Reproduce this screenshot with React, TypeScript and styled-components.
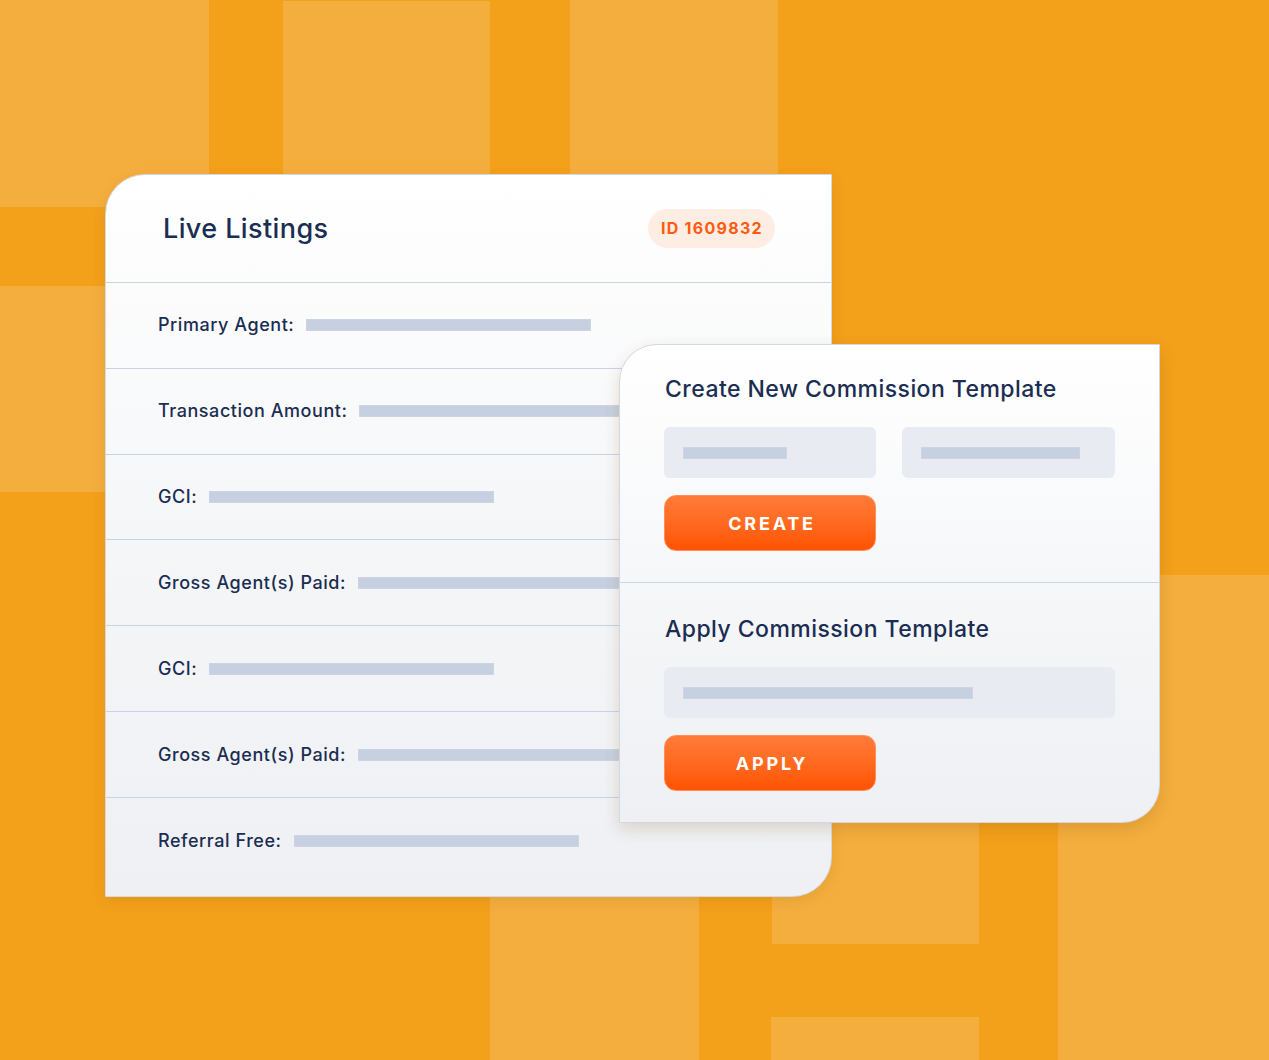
import styled, { createGlobalStyle } from "styled-components";

const GlobalStyle = createGlobalStyle`
  html, body {
    margin: 0;
    padding: 0;
    background: #f3a01b;
  }
  * {
    box-sizing: border-box;
  }
`;

const Stage = styled.div`
  position: relative;
  width: 1269px;
  height: 1060px;
  overflow: hidden;
  background: #f3a01b;
  padding: 174px 0 0 105px;
  font-family: Inter, "Open Sans", sans-serif;
  color: #1b2d52;
`;

const Tile = styled.div`
  position: absolute;
  background: #f4ae3e;
  z-index: 0;
`;

const ListingCard = styled.div`
  position: relative;
  z-index: 1;
  width: 727px;
  height: 723px;
  display: flex;
  flex-direction: column;
  background: linear-gradient(180deg, #ffffff 0%, #f6f7f9 45%, #eef0f3 100%);
  border: 1px solid #d3d9e5;
  border-radius: 40px 0 40px 0;
  box-shadow: 0 4px 14px rgba(120, 70, 0, 0.12);
`;

const CardHeader = styled.div`
  height: 108px;
  display: flex;
  align-items: center;
  justify-content: space-between;
  padding: 0 56px 0 57px;
  border-bottom: 1px solid #c9d3e6;

  h2 {
    margin: 0;
    font-size: 27px;
    font-weight: 500;
    letter-spacing: 0.4px;
    color: #1b2d52;
  }
`;

const Badge = styled.span`
  height: 39px;
  padding: 0 12px 0 13px;
  display: flex;
  align-items: center;
  border-radius: 20px;
  background: #feede3;
  color: #ff5a0f;
  font-size: 16px;
  font-weight: 700;
  letter-spacing: 1.3px;
`;

const Row = styled.div<{ $last?: boolean }>`
  height: ${({ $last }) => ($last ? "98px" : "86px")};
  display: flex;
  align-items: center;
  padding: ${({ $last }) => ($last ? "0 0 12px 52px" : "0 0 0 52px")};
  gap: 12px;
  border-bottom: ${({ $last }) => ($last ? "none" : "1px solid #c9d3e6")};
`;

const Label = styled.span`
  font-size: 18px;
  line-height: 22px;
  font-weight: 500;
  letter-spacing: 0.55px;
  color: #1b2d52;
  white-space: nowrap;
`;

const Bar = styled.div<{ $w: number }>`
  width: ${({ $w }) => $w}px;
  height: 12px;
  background: #c7d0e0;
  border: 1px solid #cdd5e4;
`;

const CommissionCard = styled.div`
  position: absolute;
  z-index: 2;
  left: 619px;
  top: 344px;
  width: 541px;
  height: 479px;
  display: flex;
  flex-direction: column;
  background: linear-gradient(180deg, #ffffff 0%, #f6f7f9 50%, #eef0f3 100%);
  border: 1px solid #d0d7e5;
  border-radius: 38px 0 38px 0;
  box-shadow: 0 6px 16px rgba(120, 70, 0, 0.18);
`;

const Section = styled.div<{ $top: number; $bordered?: boolean }>`
  display: flex;
  flex-direction: column;
  padding: ${({ $top }) => $top}px 44px 0 44px;
  height: ${({ $bordered }) => ($bordered ? "238px" : "auto")};
  border-bottom: ${({ $bordered }) => ($bordered ? "1px solid #cdd5e6" : "none")};

  h3 {
    margin: 0 0 24px 1px;
    font-size: 23px;
    line-height: 28px;
    font-weight: 500;
    letter-spacing: 0.45px;
    color: #1b2d52;
  }
`;

const Fields = styled.div`
  display: flex;
  gap: 26px;
  margin-bottom: 17px;
`;

const Field = styled.div<{ $w: number }>`
  width: ${({ $w }) => $w}px;
  height: 51px;
  display: flex;
  align-items: center;
  padding-left: 19px;
  background: #e8ebf2;
  border-radius: 6px;
`;

const Button = styled.button`
  width: 212px;
  height: 56px;
  border: 1px solid #ff8f55;
  border-radius: 12px;
  background: linear-gradient(180deg, #ff7b3a 0%, #ff6a20 50%, #ff5303 100%);
  color: #ffffff;
  font-family: Inter, "Open Sans", sans-serif;
  font-size: 18px;
  font-weight: 700;
  letter-spacing: 2.8px;
  padding: 0 0 0 4px;
  cursor: pointer;
`;

const tiles = [
  { x: 0, y: 0, w: 209, h: 207 },
  { x: 283, y: 1, w: 207, h: 200 },
  { x: 570, y: 0, w: 208, h: 200 },
  { x: 0, y: 286, w: 209, h: 206 },
  { x: 490, y: 720, w: 209, h: 340 },
  { x: 772, y: 730, w: 207, h: 214 },
  { x: 771, y: 1017, w: 208, h: 43 },
  { x: 1058, y: 575, w: 211, h: 485 },
];

const rows = [
  { label: "Primary Agent:", bar: 285 },
  { label: "Transaction Amount:", bar: 285 },
  { label: "GCI:", bar: 285 },
  { label: "Gross Agent(s) Paid:", bar: 285 },
  { label: "GCI:", bar: 285 },
  { label: "Gross Agent(s) Paid:", bar: 285 },
  { label: "Referral Free:", bar: 285 },
];

const App = () => {
  return (
    <Stage>
      <GlobalStyle />
      {tiles.map((t, i) => (
        <Tile key={i} style={{ left: t.x, top: t.y, width: t.w, height: t.h }} />
      ))}

      <ListingCard>
        <CardHeader>
          <h2>Live Listings</h2>
          <Badge>ID 1609832</Badge>
        </CardHeader>
        {rows.map((r, i) => (
          <Row key={i} $last={i === rows.length - 1}>
            <Label>{r.label}</Label>
            <Bar $w={r.bar} />
          </Row>
        ))}
      </ListingCard>

      <CommissionCard>
        <Section $top={30} $bordered>
          <h3>Create New Commission Template</h3>
          <Fields>
            <Field $w={212}>
              <Bar $w={104} />
            </Field>
            <Field $w={213}>
              <Bar $w={159} />
            </Field>
          </Fields>
          <Button>CREATE</Button>
        </Section>
        <Section $top={32}>
          <h3>Apply Commission Template</h3>
          <Fields>
            <Field $w={451}>
              <Bar $w={290} />
            </Field>
          </Fields>
          <Button>APPLY</Button>
        </Section>
      </CommissionCard>
    </Stage>
  );
};

export default App;
